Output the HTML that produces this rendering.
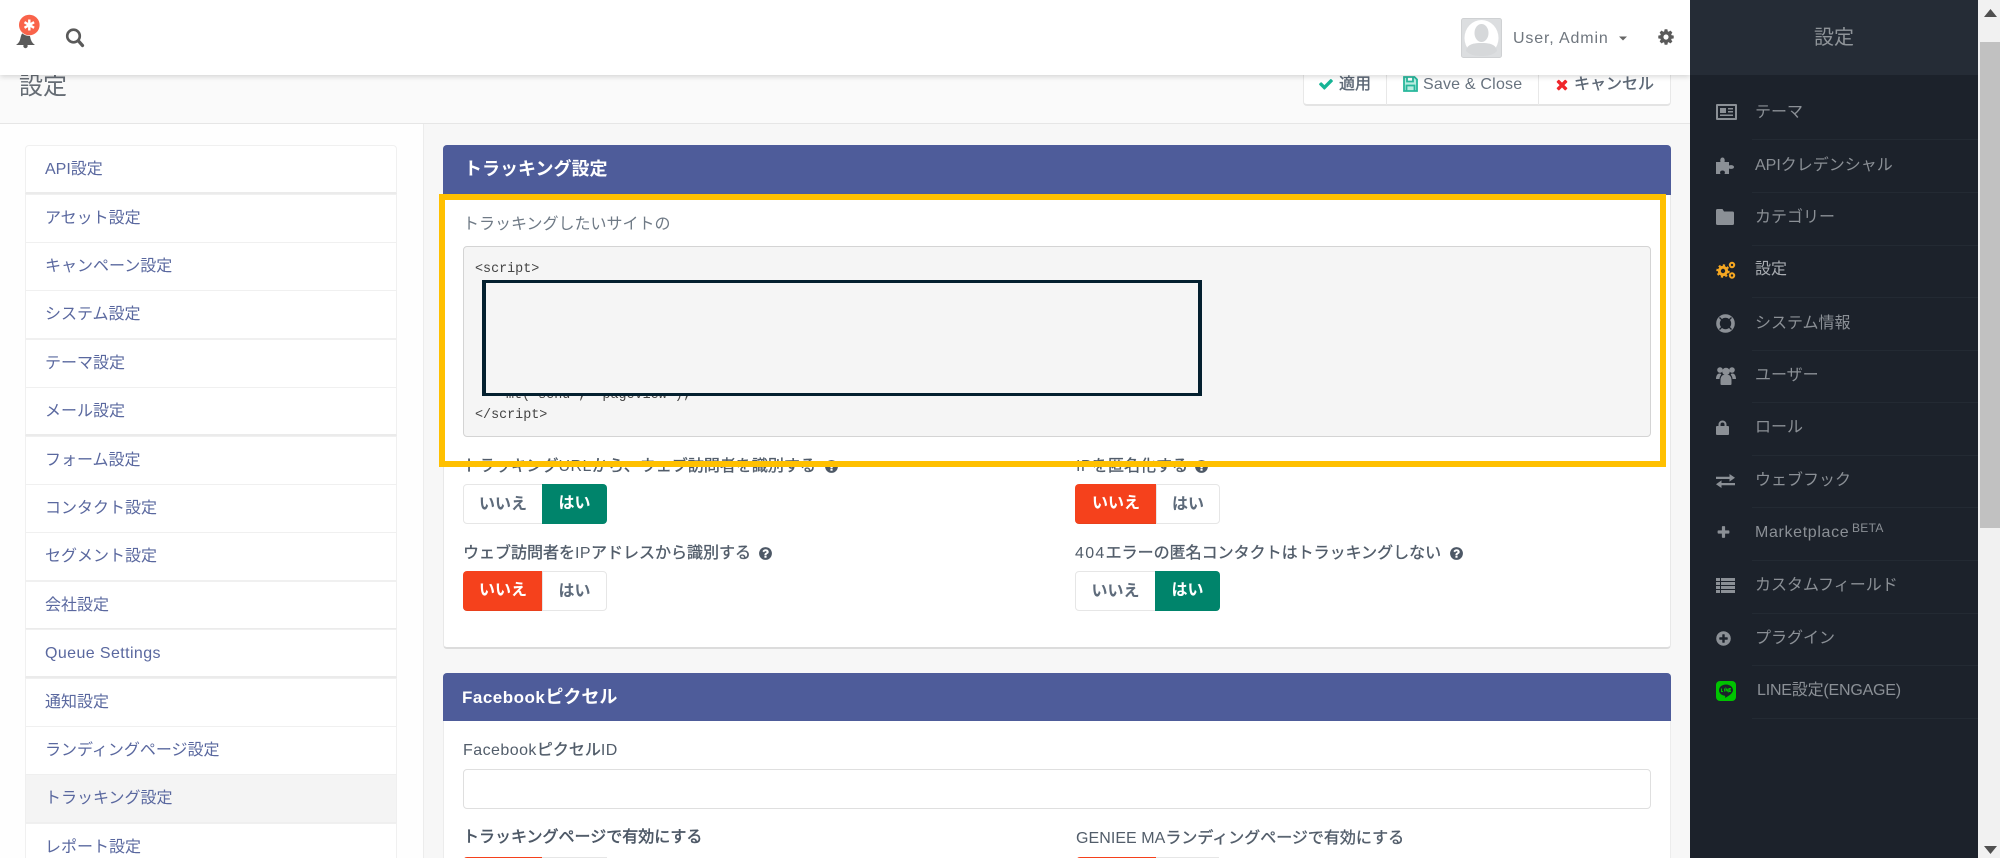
<!DOCTYPE html>
<html lang="ja"><head><meta charset="utf-8"><title>設定</title>
<style>
html,body{margin:0;padding:0;width:2000px;height:858px;overflow:hidden;background:#f7f7f7}
body{font-family:"Liberation Sans","Noto Sans CJK JP",sans-serif;font-size:16px;position:relative}
div,span,svg,pre{position:absolute;box-sizing:border-box}
em{font-style:normal;-webkit-text-stroke:0;letter-spacing:.45px}
.t{white-space:nowrap;line-height:24px;height:24px}
.li{left:25px;width:372px;height:49px;background:#fff;border:1px solid #f0f0f0;color:#5a689f;padding:12px 0 0 19px;line-height:24px;white-space:nowrap}
.li.g{border-bottom:2px solid #ebebeb}
.s{left:1755px;color:#8b9096;white-space:nowrap;line-height:24px;height:24px}
.sep{left:1752px;width:226px;height:1px;background:#232a33}
.lab{left:463px;color:#525d6a;-webkit-text-stroke:.35px #525d6a;white-space:nowrap;line-height:24px;height:24px}
.btn{height:40px;line-height:39px;text-align:center;font-weight:bold;white-space:nowrap;border:1px solid #e6e6e6;background:#fff;color:#5e6b7b}
.r{background:#f5411c;color:#fff;border:0;border-bottom:1px solid #e8401c;line-height:40px}
.g1{background:#00846b;color:#fff;border:0;line-height:40px}
.tb{color:#5c6775;-webkit-text-stroke:.35px #5c6775}
</style></head><body>

<!-- title bar -->
<div style="left:0;top:74px;width:1690px;height:50px;background:#fafafa;border-bottom:1px solid #e6e6e6"></div>
<div class="t" style="left:19px;top:74px;font-size:24px;line-height:26px;height:26px;color:#666d75">設定</div>

<!-- toolbar -->
<div style="left:1303px;top:60px;width:368px;height:46px;background:#fff;border:1px solid #e8e8e8;border-bottom:2px solid #e4e4e4;border-radius:4px"></div>
<div style="left:1386px;top:60px;width:1px;height:45px;background:#e8e8e8"></div>
<div style="left:1538px;top:60px;width:1px;height:45px;background:#e8e8e8"></div>
<svg style="left:1318px;top:76px" width="16" height="16" viewBox="0 0 1792 1792"><path fill="#16b596" d="M1671 566q0 40-28 68l-724 724-136 136q-28 28-68 28t-68-28l-136-136-362-362q-28-28-28-68t28-68l136-136q28-28 68-28t68 28l294 295 656-657q28-28 68-28t68 28l136 136q28 28 28 68z"/></svg>
<div class="t tb" style="left:1339px;top:73px">適用</div>
<svg style="left:1403px;top:76px" width="15" height="16" viewBox="0 0 15 16"><path fill="#b9ece0" stroke="#28b79c" stroke-width="1.800" d="M1 1h10.500L14 3.500V15H1zM4 1v4.500h6V1M3.500 15V9.500h8V15"/></svg>
<div class="t" style="left:1423px;top:73px;color:#68737f;letter-spacing:.2px">Save &amp; Close</div>
<svg style="left:1554px;top:76px" width="16" height="17" viewBox="0 0 1792 1792"><path fill="#f0262b" d="M1490 1322q0 40-28 68l-136 136q-28 28-68 28t-68-28l-294-294-294 294q-28 28-68 28t-68-28l-136-136q-28-28-28-68t28-68l294-294-294-294q-28-28-28-68t28-68l136-136q28-28 68-28t68 28l294 294 294-294q28-28 68-28t68 28l136 136q28 28 28 68t-28 68l-294 294 294 294q28 28 28 68z"/></svg>
<div class="t tb" style="left:1574px;top:73px">キャンセル</div>

<!-- left column -->
<div style="left:0;top:124px;width:424px;height:734px;background:#fefefe;border-right:1px solid #ececec"></div>
<div class="li g" style="top:145px;border-radius:4px 4px 0 0;height:49px">API設定</div>
<div class="li" style="top:194px">アセット設定</div>
<div class="li" style="top:242px">キャンペーン設定</div>
<div class="li" style="top:290px">システム設定</div>
<div class="li" style="top:339px">テーマ設定</div>
<div class="li g" style="top:387px">メール設定</div>
<div class="li" style="top:436px">フォーム設定</div>
<div class="li" style="top:484px">コンタクト設定</div>
<div class="li" style="top:532px">セグメント設定</div>
<div class="li g" style="top:581px">会社設定</div>
<div class="li g" style="top:629px;letter-spacing:.4px">Queue Settings</div>
<div class="li" style="top:678px">通知設定</div>
<div class="li" style="top:726px">ランディングページ設定</div>
<div class="li" style="top:774px;background:#f4f4f4;border-color:#efefef">トラッキング設定</div>
<div class="li" style="top:823px">レポート設定</div>

<!-- panel 1 -->
<div style="left:443px;top:145px;width:1228px;height:504px;background:#fff;border:1px solid #e8e8e8;border-bottom:2px solid #dcdcdc;border-radius:4px"></div>
<div style="left:443px;top:145px;width:1228px;height:50px;background:#4e5c9a;border-radius:4px 4px 0 0"></div>
<div class="t" style="left:464px;top:157px;color:#fff;font-weight:bold;font-size:18px">トラッキング設定</div>
<div class="t" style="left:463px;top:211px;color:#6f7a86;margin-top:2px">トラッキングしたいサイトの</div>

<div style="left:463px;top:246px;width:1188px;height:191px;background:#f5f5f5;border:1px solid #d4d4d4;border-radius:4px"></div>
<div class="t" style="left:475px;top:258px;font-family:'Liberation Mono',monospace;font-size:13.4px;color:#444">&lt;script&gt;</div>
<div class="t" style="left:506px;top:384px;font-family:'Liberation Mono',monospace;font-size:13.4px;color:#444">mt('send', 'pageview');</div>
<div class="t" style="left:475px;top:404px;font-family:'Liberation Mono',monospace;font-size:13.4px;color:#444">&lt;/script&gt;</div>
<div style="left:482px;top:280px;width:720px;height:116px;background:#f5f5f5;border:solid #04202f;border-width:3px 4px"></div>

<div class="lab" style="top:455px">トラッキング<em>URL</em>から、ウェブ訪問者を識別する</div>
<svg style="left:824px;top:459px" width="15" height="15" viewBox="0 0 1792 1792"><path fill="#4d5866" d="M1024 1376v-192q0-14-9-23t-23-9h-192q-14 0-23 9t-9 23v192q0 14 9 23t23 9h192q14 0 23-9t9-23zm256-672q0-88-55.500-163t-138.500-116-170-41q-243 0-371 213-15 24 8 42l132 100q7 6 19 6 16 0 25-12 53-68 86-92 34-24 86-24 48 0 85.500 26t37.500 59q0 38-20 61t-68 45q-63 28-115.500 86.500t-52.500 125.500v36q0 14 9 23t23 9h192q14 0 23-9t9-23q0-19 21.500-49.500t54.500-49.500q32-18 49-28.500t46-35 44.500-48 28-60.500 12.500-81zm384 192q0 209-103 385.500t-279.500 279.500-385.500 103-385.500-103-279.500-279.500-103-385.500 103-385.500 279.500-279.500 385.500-103 385.500 103 279.500 279.500 103 385.500z"/></svg>
<div class="lab" style="left:1076px;top:455px"><em>IP</em>を匿名化する</div>
<svg style="left:1194px;top:459px" width="15" height="15" viewBox="0 0 1792 1792"><path fill="#4d5866" d="M1024 1376v-192q0-14-9-23t-23-9h-192q-14 0-23 9t-9 23v192q0 14 9 23t23 9h192q14 0 23-9t9-23zm256-672q0-88-55.500-163t-138.500-116-170-41q-243 0-371 213-15 24 8 42l132 100q7 6 19 6 16 0 25-12 53-68 86-92 34-24 86-24 48 0 85.500 26t37.500 59q0 38-20 61t-68 45q-63 28-115.500 86.500t-52.500 125.500v36q0 14 9 23t23 9h192q14 0 23-9t9-23q0-19 21.500-49.500t54.500-49.500q32-18 49-28.500t46-35 44.500-48 28-60.500 12.500-81zm384 192q0 209-103 385.500t-279.500 279.500-385.500 103-385.500-103-279.500-279.500-103-385.500 103-385.500 279.500-279.500 385.500-103 385.500 103 279.500 279.500 103 385.500z"/></svg>

<!-- yellow highlight -->
<div style="left:439px;top:194px;width:1227px;height:273px;border:6px solid #ffc000;z-index:3"></div>

<div class="btn" style="left:463px;top:484px;width:80px;border-radius:4px 0 0 4px">いいえ</div>
<div class="btn g1" style="left:542px;top:484px;width:65px;border-radius:0 4px 4px 0">はい</div>
<div class="btn r" style="left:1075px;top:484px;width:82px;border-radius:4px 0 0 4px">いいえ</div>
<div class="btn" style="left:1156px;top:484px;width:64px;border-radius:0 4px 4px 0">はい</div>

<div class="lab" style="top:542px">ウェブ訪問者を<em>IP</em>アドレスから識別する</div>
<svg style="left:758px;top:546px" width="15" height="15" viewBox="0 0 1792 1792"><path fill="#4d5866" d="M1024 1376v-192q0-14-9-23t-23-9h-192q-14 0-23 9t-9 23v192q0 14 9 23t23 9h192q14 0 23-9t9-23zm256-672q0-88-55.500-163t-138.500-116-170-41q-243 0-371 213-15 24 8 42l132 100q7 6 19 6 16 0 25-12 53-68 86-92 34-24 86-24 48 0 85.500 26t37.500 59q0 38-20 61t-68 45q-63 28-115.500 86.500t-52.500 125.500v36q0 14 9 23t23 9h192q14 0 23-9t9-23q0-19 21.500-49.500t54.500-49.500q32-18 49-28.500t46-35 44.500-48 28-60.500 12.500-81zm384 192q0 209-103 385.500t-279.500 279.500-385.500 103-385.500-103-279.500-279.500-103-385.500 103-385.500 279.500-279.500 385.500-103 385.500 103 279.500 279.500 103 385.500z"/></svg>
<div class="lab" style="left:1075px;top:542px"><em style="letter-spacing:1.300px">404</em>エラーの匿名コンタクトはトラッキングしない</div>
<svg style="left:1449px;top:546px" width="15" height="15" viewBox="0 0 1792 1792"><path fill="#4d5866" d="M1024 1376v-192q0-14-9-23t-23-9h-192q-14 0-23 9t-9 23v192q0 14 9 23t23 9h192q14 0 23-9t9-23zm256-672q0-88-55.500-163t-138.500-116-170-41q-243 0-371 213-15 24 8 42l132 100q7 6 19 6 16 0 25-12 53-68 86-92 34-24 86-24 48 0 85.500 26t37.500 59q0 38-20 61t-68 45q-63 28-115.500 86.500t-52.500 125.500v36q0 14 9 23t23 9h192q14 0 23-9t9-23q0-19 21.500-49.500t54.500-49.500q32-18 49-28.500t46-35 44.500-48 28-60.500 12.500-81zm384 192q0 209-103 385.500t-279.500 279.500-385.500 103-385.500-103-279.500-279.500-103-385.500 103-385.500 279.500-279.500 385.500-103 385.500 103 279.500 279.500 103 385.500z"/></svg>

<div class="btn r" style="left:463px;top:571px;width:80px;border-radius:4px 0 0 4px">いいえ</div>
<div class="btn" style="left:542px;top:571px;width:65px;border-radius:0 4px 4px 0">はい</div>
<div class="btn" style="left:1075px;top:571px;width:81px;border-radius:4px 0 0 4px">いいえ</div>
<div class="btn g1" style="left:1155px;top:571px;width:65px;border-radius:0 4px 4px 0">はい</div>

<!-- panel 2 -->
<div style="left:443px;top:673px;width:1228px;height:200px;background:#fff;border:1px solid #ececec;border-radius:4px"></div>
<div style="left:443px;top:673px;width:1228px;height:48px;background:#4e5c9a;border-radius:4px 4px 0 0"></div>
<div class="t" style="left:462px;top:685px;color:#fff;font-weight:bold;font-size:18px"><em style="font-size:17px;letter-spacing:.5px">Facebook</em>ピクセル</div>
<div class="lab" style="top:739px"><em>Facebook</em>ピクセル<em>ID</em></div>
<div style="left:463px;top:769px;width:1188px;height:40px;background:#fff;border:1px solid #dfdfdf;border-radius:4px"></div>
<div class="lab" style="top:826px;-webkit-text-stroke:.5px #4d5866;color:#4d5866">トラッキングページで有効にする</div>
<div class="lab" style="left:1076px;top:827px"><em style="letter-spacing:.05px">GENIEE MA</em>ランディングページで有効にする</div>
<div class="btn r" style="left:463px;top:857px;width:80px;border-radius:4px 0 0 4px"></div>
<div class="btn" style="left:542px;top:857px;width:65px"></div>
<div class="btn r" style="left:1076px;top:857px;width:80px;border-radius:4px 0 0 4px"></div>
<div class="btn" style="left:1156px;top:857px;width:63px"></div>

<!-- header -->
<div style="left:0;top:0;width:1690px;height:75px;background:#fff;box-shadow:0 2px 5px rgba(0,0,0,.14);z-index:4"></div>
<svg style="left:0;top:0;z-index:5" width="100" height="60" viewBox="0 0 100 60">
<path fill="#5a5a5a" d="M25.500 32C21 32 21 37 20 40 19 42.500 17.500 44 16 45H35C33.500 44 32 42.500 31 40 30 37 30 32 25.500 32z"/>
<circle cx="25.500" cy="46" r="2.200" fill="#5a5a5a"/>
<circle cx="29.300" cy="25" r="11" fill="#fff"/>
<circle cx="29.300" cy="25" r="10.300" fill="#f9634a"/>
<path stroke="#fff" stroke-width="2.400" d="M29.300 19.500v11M24.500 22.200l9.600 5.600M34.100 22.200l-9.600 5.600"/>
<circle cx="73.500" cy="36" r="6.300" fill="none" stroke="#5a5a5a" stroke-width="2.600"/>
<path stroke="#5a5a5a" stroke-width="3.200" stroke-linecap="round" d="M78.500 41l4 4.500"/>
</svg>
<svg style="left:1461px;top:18px;z-index:5" width="41" height="40" viewBox="0 0 41 40">
<rect x=".5" y=".5" width="40" height="39" rx="2" fill="#dcdee0" stroke="#cfd1d3"/>
<ellipse cx="20.500" cy="20" rx="17" ry="18" fill="#fff"/>
<ellipse cx="20.500" cy="15" rx="7" ry="9" fill="#d6d8da"/>
<path fill="#d6d8da" d="M5 33c1-7 8-8 15.500-8S35 26 36 33c-4 4-9 5-15.500 5S9 37 5 33z"/>
</svg>
<div class="t" style="left:1513px;top:27px;color:#6f767e;z-index:5;letter-spacing:.85px">User, Admin</div>
<svg style="left:1619px;top:36px;z-index:5" width="9" height="6"><path fill="#666" d="M0 .5h8L4 4.500z"/></svg>
<svg style="left:1657px;top:28px;z-index:5" width="18" height="18" viewBox="0 0 1792 1792"><path fill="#5a5a5a" d="M1152 896q0-106-75-181t-181-75-181 75-75 181 75 181 181 75 181-75 75-181zm512-109v222q0 12-8 23t-20 13l-185 28q-19 54-39 91 35 50 107 138 10 12 10 25t-9 23q-27 37-99 108t-94 71q-12 0-26-9l-138-108q-44 23-91 38-16 136-29 186-7 28-36 28h-222q-14 0-24.500-8.500t-11.500-21.500l-28-184q-49-16-90-37l-141 107q-10 9-25 9-14 0-25-11-126-114-165-168-7-10-7-23 0-12 8-23 15-21 51-66.500t54-70.500q-27-50-41-99l-183-27q-13-2-21-12.500t-8-23.500v-222q0-12 8-23t19-13l186-28q14-46 39-92-40-57-107-138-10-12-10-24 0-10 9-23 26-36 98.500-107.500t94.500-71.500q13 0 26 10l138 107q44-23 91-38 16-136 29-186 7-28 36-28h222q14 0 24.500 8.500t11.500 21.500l28 184q49 16 90 37l142-107q9-9 24-9 13 0 25 10 129 119 165 170 7 8 7 22 0 12-8 23-15 21-51 66.500t-54 70.500q26 50 41 98l183 28q13 2 21 12.500t8 23.500z"/></svg>

<!-- right sidebar -->
<div style="left:1690px;top:0;width:288px;height:858px;background:#1c222b;z-index:6"></div>
<div style="left:1690px;top:0;width:288px;height:75px;background:#252c36;z-index:6"></div>
<div style="left:0;top:0;width:2000px;height:858px;z-index:7">
<div class="t" style="left:1814px;top:26px;color:#8f9499;font-size:20px">設定</div>

<div class="sep" style="top:139px"></div><div class="sep" style="top:192px"></div><div class="sep" style="top:245px"></div><div class="sep" style="top:297px"></div><div class="sep" style="top:350px"></div><div class="sep" style="top:402px"></div><div class="sep" style="top:455px"></div><div class="sep" style="top:507px"></div><div class="sep" style="top:560px"></div><div class="sep" style="top:613px"></div><div class="sep" style="top:665px"></div><div class="sep" style="top:718px"></div>

<svg style="left:1716px;top:104px" width="21" height="16" viewBox="0 0 21 16"><path fill="#8b9096" fill-rule="evenodd" d="M1 0h19a1 1 0 011 1v14a1 1 0 01-1 1H1a1 1 0 01-1-1V1a1 1 0 011-1zM2 2v12h17V2zM4 4h6v5H4zM12 4h5v1.500h-5zM12 7h5v1.500h-5zM4 10.500h13V12H4z"/></svg>
<div class="s" style="top:101px">テーマ</div>

<svg style="left:1716px;top:157px" width="18" height="17" viewBox="0 0 18 17"><path fill="#8b9096" d="M0 5h4.500C4 3.500 4.200 .5 6.500.5S9 3.500 8.500 5H13v3.500c1.500-.8 5-.6 5 1.500s-3.500 2.300-5 1.500V17H8.500c.8-1.500.6-3.500-2-3.500S3.700 15.500 4.500 17H0z"/></svg>
<div class="s" style="top:154px">APIクレデンシャル</div>

<svg style="left:1716px;top:209px" width="18" height="16" viewBox="0 0 18 16"><path fill="#8b9096" d="M1.500 0h5L8 2.500h8.500A1.500 1.500 0 0118 4v10.500a1.500 1.500 0 01-1.500 1.500h-15A1.500 1.500 0 010 14.500v-13A1.500 1.500 0 011.500 0z"/></svg>
<div class="s" style="top:206px">カテゴリー</div>

<svg style="left:1716px;top:261px" width="20" height="18" viewBox="0 0 20 18"><g fill="none" stroke="#f6a822"><circle cx="7" cy="10" r="3.700" stroke-width="3"/><circle cx="7" cy="10" r="5.800" stroke-width="1.800" stroke-dasharray="2.200 2.300"/><circle cx="16" cy="4" r="2.200" stroke-width="2"/><circle cx="16" cy="14.500" r="2.200" stroke-width="2"/></g></svg>
<div class="s" style="top:258px;color:#a9adb2">設定</div>

<svg style="left:1716px;top:314px" width="19" height="19" viewBox="0 0 19 19"><circle cx="9.500" cy="9.500" r="7.500" fill="none" stroke="#8b9096" stroke-width="3.600"/><path stroke="#1c222b" stroke-width="1.300" d="M3.500 3.500l3.500 3.500M15.500 3.500L12 7M3.500 15.500L7 12M15.500 15.500L12 12"/></svg>
<div class="s" style="top:312px">システム情報</div>

<svg style="left:1716px;top:366px" width="20" height="19" viewBox="0 0 20 19"><g fill="#8b9096"><circle cx="4" cy="4" r="2.800"/><circle cx="16" cy="4" r="2.800"/><circle cx="10" cy="5.500" r="3.800"/><path d="M0 13c0-4 2-5.500 3.500-5.500s1.500.5 1.800 1C3.800 10.500 3.500 12 3.500 13zM20 13c0-4-2-5.500-3.500-5.500s-1.500.5-1.800 1c1.500 2 1.800 3.500 1.800 4.500zM4.500 18v-4c0-3.500 2-5 3-5h5c1 0 3 1.500 3 5v4c0 .5-.5 1-1 1h-9c-.5 0-1-.5-1-1z"/></g></svg>
<div class="s" style="top:364px">ユーザー</div>

<svg style="left:1716px;top:420px" width="13" height="15" viewBox="0 0 13 15"><path fill="#8b9096" fill-rule="evenodd" d="M2.500 6V4.500a4 4 0 018 0V6H12a1 1 0 011 1v7a1 1 0 01-1 1H1a1 1 0 01-1-1V7a1 1 0 011-1zM4.500 6h4V4.500a2 2 0 00-4 0z"/></svg>
<div class="s" style="top:416px">ロール</div>

<svg style="left:1716px;top:474px" width="19" height="14" viewBox="0 0 19 14"><path fill="#8b9096" d="M13.500 0L19 3.800l-5.500 3.800V5H0V2.700h13.500zM5.500 6.400V9H19v2.300H5.500V14L0 10.200z"/></svg>
<div class="s" style="top:469px">ウェブフック</div>

<svg style="left:1716px;top:525px" width="15" height="15" viewBox="0 0 1792 1792"><path fill="#8b9096" d="M1600 736v192q0 40-28 68t-68 28h-416v416q0 40-28 68t-68 28h-192q-40 0-68-28t-28-68v-416h-416q-40 0-68-28t-28-68v-192q0-40 28-68t68-28h416v-416q0-40 28-68t68-28h192q40 0 68 28t28 68v416h416q40 0 68 28t28 68z"/></svg>
<div class="s" style="top:521px;letter-spacing:.65px">Marketplace</div>
<div class="s" style="left:1852px;top:516px;font-size:12px;letter-spacing:.3px">BETA</div>

<svg style="left:1716px;top:578px" width="19" height="15" viewBox="0 0 19 15"><path fill="#8b9096" d="M0 0h4v3H0zM5 0h14v3H5zM0 4h4v3H0zM5 4h14v3H5zM0 8h4v3H0zM5 8h14v3H5zM0 12h4v3H0zM5 12h14v3H5z"/></svg>
<div class="s" style="top:574px">カスタムフィールド</div>

<svg style="left:1715px;top:630px" width="17" height="17" viewBox="0 0 1792 1792"><path fill="#8b9096" d="M1344 960v-128q0-26-19-45t-45-19h-256v-256q0-26-19-45t-45-19h-128q-26 0-45 19t-19 45v256h-256q-26 0-45 19t-19 45v128q0 26 19 45t45 19h256v256q0 26 19 45t45 19h128q26 0 45-19t19-45v-256h256q26 0 45-19t19-45zm320-64q0 209-103 385.500t-279.500 279.500-385.500 103-385.500-103-279.500-279.500-103-385.500 103-385.500 279.500-279.500 385.500-103 385.500 103 279.500 279.500 103 385.500z"/></svg>
<div class="s" style="top:627px">プラグイン</div>

<svg style="left:1716px;top:681px" width="20" height="20" viewBox="0 0 20 20"><rect width="20" height="20" rx="4" fill="#00c300"/><path fill="#1c222b" d="M10 3.500c-4 0-7 2.500-7 5.800 0 3 2.500 5 5.800 5.500.6.200.3 1.200.3 1.700 0 .4.400.3 1-.1 1.800-1.100 6.900-3.900 6.900-7.100 0-3.300-3-5.800-7-5.800z"/><path stroke="#00c300" stroke-width="1" fill="none" d="M5.500 7.500v3h1.500M8.500 7.500v3M10 10.500v-3l2 3v-3M15 7.500h-1.800v3H15M13.200 9H15"/></svg>
<div class="s" style="left:1757px;top:679px;letter-spacing:-.2px">LINE設定(ENGAGE)</div>
</div>

<!-- scrollbar -->
<div style="left:1978px;top:0;width:22px;height:858px;background:#f1f1f1;z-index:8"></div>
<div style="left:1980px;top:42px;width:20px;height:486px;background:#c1c1c1;z-index:8"></div>
<svg style="left:1984px;top:9px;z-index:8" width="13" height="8"><path fill="#505050" d="M6.500 0L13 8H0z"/></svg>
<svg style="left:1984px;top:846px;z-index:8" width="13" height="8"><path fill="#505050" d="M0 0h13L6.500 8z"/></svg>
</body></html>
